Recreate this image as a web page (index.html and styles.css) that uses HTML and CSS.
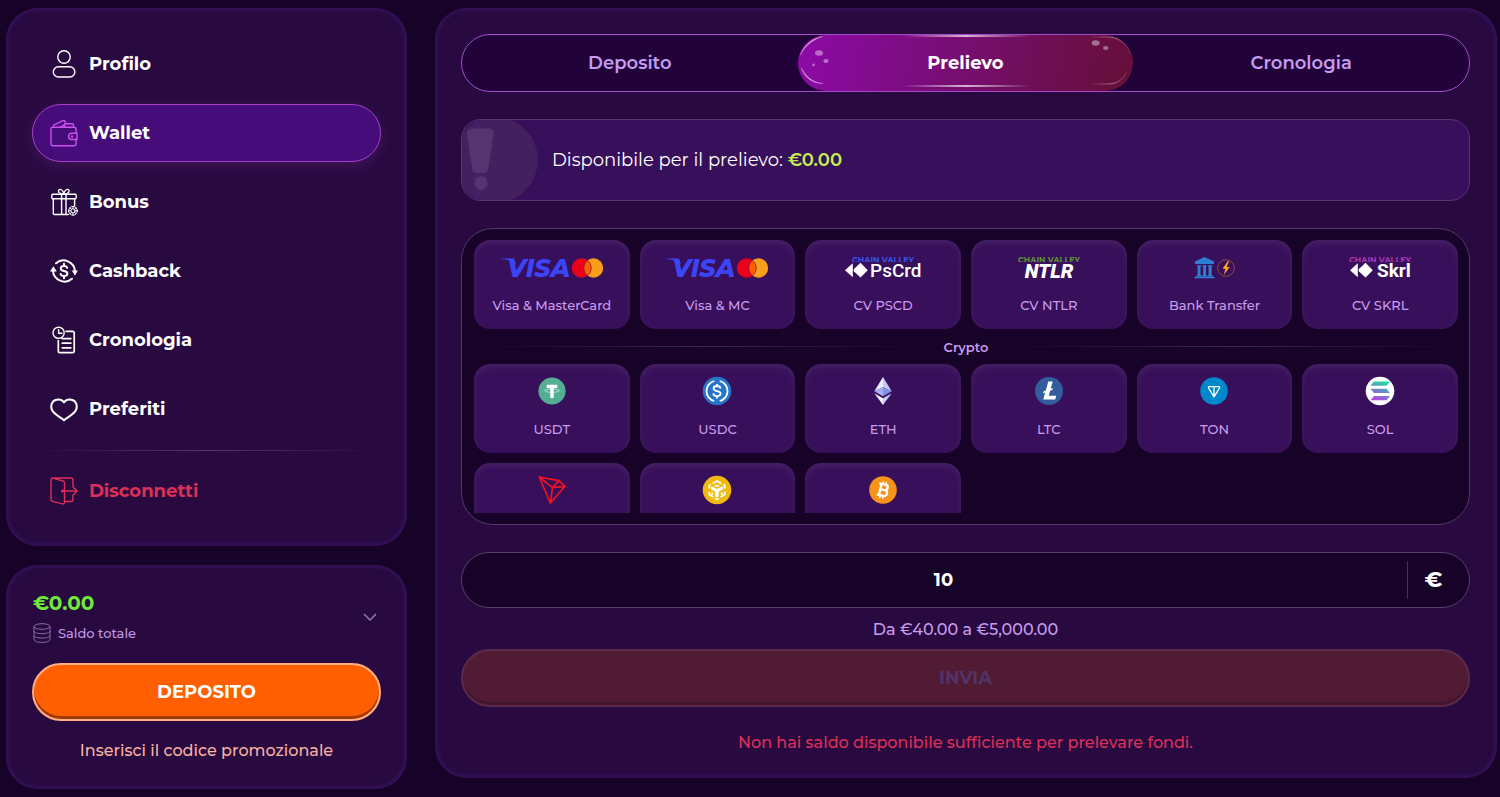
FILE: index.html
```html
<!DOCTYPE html>
<html lang="it">
<head>
<meta charset="utf-8">
<meta name="viewport" content="width=device-width, initial-scale=1">
<title>Wallet - Prelievo</title>
<link rel="stylesheet" href="styles.css">
</head>
<body>
<div class="layout">
  <aside class="sidebar">
    <nav class="panel menu" aria-label="Account">
      <a class="menu-item" href="#profilo">
        <svg class="menu-icon" viewBox="0 0 28 28"><circle cx="14" cy="7" r="6.2"/><rect x="3.3" y="16.8" width="21.6" height="10.2" rx="5.1"/></svg>
        Profilo
      </a>
      <a class="menu-item menu-item--active" href="#wallet" aria-current="page">
        <svg class="menu-icon" viewBox="0 0 28 28"><path d="M3 8.2h21a2 2 0 0 1 2 2v4.1M26 20.500v4.300a2 2 0 0 1-2 2H3.200a2.200 2.200 0 0 1-2.200-2.200V9.200q0-1 2-1M3.500 8V6.200l9.500-4.500q1.500-.6 2 1l.5 1.800M10.500 8l4.500-3M14.500 8V6.200q0-1.500 1.500-1.500h6q1.500 0 1.500 1.500V8"/><path d="M27 14.300h-5.300a3.100 3.100 0 0 0 0 6.200H27z"/><circle cx="22" cy="17.400" r=".5"/></svg>
        Wallet
      </a>
      <a class="menu-item" href="#bonus">
        <svg class="menu-icon" viewBox="0 0 28 28"><rect x="1.800" y="6.200" width="24.400" height="4.600" rx="1"/><path d="M3.300 10.800V25.500a1 1 0 0 0 1 1h14M24.600 10.800v7M11.600 6.500v20M16 6.500v20M13.800 6C10 6 8 4.500 8.600 2.600c1-2.600 4.800-.8 5.200 3.400.4-4.200 4.200-6 5.200-3.400C19.600 4.500 17.600 6 13.800 6z"/><g class="thin"><circle cx="23" cy="22.800" r="4.400"/><circle cx="23" cy="22.800" r="2.100"/><path d="M23 18.400v2.200M23 25v2.200M18.600 22.800h2.200M25.200 22.800h2.200M20 19.800l1.500 1.500M26 19.800l-1.500 1.500M20 25.800l1.500-1.500M26 25.800l-1.500-1.500"/></g></svg>
        Bonus
      </a>
      <a class="menu-item" href="#cashback">
        <svg class="menu-icon menu-icon--bold" viewBox="0 0 28 28"><path d="M6 6.300A11.500 11.500 0 0 1 25 14M22 21.700A11.500 11.500 0 0 1 3 14"/><path class="solid" d="M0 14.500L3.400 9.200l3.400 5.300zM21.800 13.500h6L25 18.800z"/><path d="M17.200 10.800c-.5-1.300-1.700-1.800-3.200-1.800-1.800 0-3.200.9-3.200 2.400 0 3.500 6.600 1.600 6.600 5.100 0 1.600-1.500 2.500-3.400 2.500-1.700 0-3-.7-3.400-2M14 6.800V9M14 19v2.200"/></svg>
        Cashback
      </a>
      <a class="menu-item" href="#cronologia">
        <svg class="menu-icon" viewBox="0 0 28 28"><circle cx="8.600" cy="6.800" r="5.600"/><path d="M8.600 3.600v3.600H12" /><path class="mid" d="M8.300 14.500v10.700a1.500 1.500 0 0 0 1.500 1.500h12.900a1.500 1.500 0 0 0 1.500-1.500V6.800a1.500 1.500 0 0 0-1.500-1.500H16M12.300 12.600h8.500M12.300 17.200h8.500M12.300 21.800h8.500"/></svg>
        Cronologia
      </a>
      <a class="menu-item" href="#preferiti">
        <svg class="menu-icon menu-icon--bold" viewBox="0 0 28 28"><path d="M14 25.200C12.500 23.900 7 20.800 3.600 17.200-.7 12.600 1 5 8 4.500c2.500-.1 4.600 1 6 2.800 1.400-1.800 3.500-2.900 6-2.800 7 .5 8.700 8.100 4.400 12.700C21 20.800 15.500 23.900 14 25.200z"/></svg>
        Preferiti
      </a>
      <hr class="menu-divider">
      <button class="menu-item menu-item--logout" type="button">
        <svg class="menu-icon" viewBox="0 0 28 28"><path d="M2.800 1h18.200a2 2 0 0 1 2 2v7M23 18v4.500a2 2 0 0 1-2 2h-6M2.800 1A2 2 0 0 0 1 3v19.500a2 2 0 0 0 1.500 1.900l10 2.500a1.500 1.500 0 0 0 2-1.500V6a2 2 0 0 0-1.500-2L2.800 1zM12 14h15M23.500 10.500L27.200 14l-3.700 3.600"/><circle cx="12.500" cy="14" r=".9"/></svg>
        Disconnetti
      </button>
    </nav>

    <section class="panel balance">
      <button class="balance-toggle" type="button" aria-expanded="false">
        <span class="balance-info">
          <span class="balance-amount">€0.00</span>
          <span class="balance-label">
            <svg class="coins-icon" viewBox="0 0 18 20"><ellipse cx="9" cy="3.500" rx="8" ry="2.800"/><path d="M1 3.500v4.300c0 1.800 3.500 2.900 8 2.900s8-1.100 8-2.900V3.500M1 8v4.200c0 1.800 3.500 2.900 8 2.900s8-1.100 8-2.900V8M1 12.500v4c0 1.800 3.500 2.900 8 2.900s8-1.100 8-2.900v-4"/></svg>
            Saldo totale
          </span>
        </span>
        <svg class="chevron-icon" viewBox="0 0 14 8"><path d="M1 1l6 6 6-6"/></svg>
      </button>
      <button class="cta" type="button">DEPOSITO</button>
      <button class="promo" type="button">Inserisci il codice promozionale</button>
    </section>
  </aside>

  <main class="panel content">
    <div class="tabs" role="tablist">
      <button class="tab" type="button" role="tab" aria-selected="false">Deposito</button>
      <button class="tab tab--active" type="button" role="tab" aria-selected="true">
        <svg class="tab-shine" viewBox="0 0 336 56" aria-hidden="true">
          <defs>
            <linearGradient id="line"><stop offset="0" stop-color="#fff" stop-opacity="0"/><stop offset=".5" stop-color="#fff" stop-opacity=".7"/><stop offset="1" stop-color="#fff" stop-opacity="0"/></linearGradient>
            <linearGradient id="edge"><stop offset="0" stop-color="#fff" stop-opacity="0"/><stop offset=".6" stop-color="#fff" stop-opacity=".4"/><stop offset="1" stop-color="#fff" stop-opacity=".1"/></linearGradient>
          </defs>
          <rect x="103" y="0" width="130" height="2" fill="url(#line)"/>
          <rect x="103" y="50" width="130" height="2" fill="url(#line)"/>
          <g class="shine-dots"><ellipse cx="21" cy="18" rx="4" ry="2.700"/><ellipse cx="28" cy="26" rx="2.600" ry="2.100"/><circle cx="15.500" cy="30" r="1.400"/><ellipse cx="298" cy="8" rx="4" ry="2.700"/><ellipse cx="308" cy="13" rx="2.700" ry="2"/></g>
          <path class="shine-arcs" d="M2.500 20C6 10 14 3 25 1.500c-9 2.500-18 9-22.500 18.500zM3.500 33C8 42 15 47.500 25 48.500 14 48.500 6.500 42.500 3.500 33z"/>
          <path class="shine-edge" d="M290 2h20c10 0 19 6 22.500 16.500M290 49h20c9 0 16-4.500 19-12"/>
        </svg>
        <span class="tab-text">Prelievo</span>
      </button>
      <button class="tab" type="button" role="tab" aria-selected="false">Cronologia</button>
    </div>

    <div class="notice">
      <svg class="notice-icon" viewBox="0 0 76 80" aria-hidden="true"><circle class="notice-disc" cx="33" cy="40" r="43"/><path class="notice-mark" d="M5 14c-.4-3.500 2-5.500 6-5.500h15c4 0 6 2 5.500 5.500l-5 34c-.5 3.500-2.500 5-6 5h-4.500c-3.500 0-5.500-1.500-6-5z"/><circle class="notice-mark" cx="19" cy="63" r="6.700"/></svg>
      <p class="notice-text">Disponibile per il prelievo: <strong class="notice-sum">€0.00</strong></p>
    </div>

    <div class="methods">
      <div class="methods-scroll">
        <div class="grid">
          <button class="method" type="button">
            <svg class="logo" viewBox="0 0 104 28"><path fill="#3b45f5" d="M1 5.500h13l2 6C12 8 7 6.300 1 6z"/><text class="visa-text" x="7" y="24">VISA</text><circle cx="81.500" cy="15" r="9.700" fill="#eb001b"/><circle cx="93.500" cy="15" r="9.700" fill="#f79e1b"/><path d="M87.500 7.400a9.700 9.700 0 0 1 0 15.200 9.700 9.700 0 0 1 0-15.200z" fill="#ff5f00" stroke="#7a1735" stroke-width=".8"/></svg>
            <span>Visa &amp; MasterCard</span>
          </button>
          <button class="method" type="button">
            <svg class="logo" viewBox="0 0 104 28"><path fill="#3b45f5" d="M1 5.500h13l2 6C12 8 7 6.300 1 6z"/><text class="visa-text" x="7" y="24">VISA</text><circle cx="81.500" cy="15" r="9.700" fill="#eb001b"/><circle cx="93.500" cy="15" r="9.700" fill="#f79e1b"/><path d="M87.500 7.400a9.700 9.700 0 0 1 0 15.200 9.700 9.700 0 0 1 0-15.200z" fill="#ff5f00" stroke="#7a1735" stroke-width=".8"/></svg>
            <span>Visa &amp; MC</span>
          </button>
          <button class="method" type="button">
            <svg class="logo" viewBox="0 0 104 28">
              <svg x="0" y="0" width="104" height="9"><text class="chain-text chain-text--blue" x="52" y="10">CHAIN VALLEY</text></svg>
              <path fill="#fff" d="M14 17.300l7.800-7v14zM22.700 16.300l6.800-6.500 7.300 7.500-7.300 7.300-6.800-6.300z"/>
              <text class="brand-text" x="39" y="24">PsCrd</text>
            </svg>
            <span>CV PSCD</span>
          </button>
          <button class="method" type="button">
            <svg class="logo" viewBox="0 0 104 28">
              <svg x="0" y="0" width="104" height="9"><text class="chain-text chain-text--green" x="52" y="10">CHAIN VALLEY</text></svg>
              <text class="ntlr-text" x="52" y="25">NTLR</text>
            </svg>
            <span>CV NTLR</span>
          </button>
          <button class="method" type="button">
            <svg class="logo" viewBox="0 0 104 28"><path fill="#2d7fd3" d="M42.500 4L52 8.500V11H33V8.500zM35 12.300h4.200v1.200h-.7v8.300h.7V23H35v-1.200h.6v-8.300H35zM40.500 12.300h4.200v1.200H44v8.300h.7V23h-4.200v-1.200h.7v-8.300h-.7zM46 12.300h4.200v1.200h-.6v8.300h.6V23H46v-1.200h.6v-8.300H46zM33.300 23.300h18.400L53 25.300H32z"/><circle cx="64" cy="15" r="8.300" fill="none" stroke="#8c4a4a" stroke-width="1"/><path fill="#ffa51f" d="M65.800 8.300l-5.300 7.500h3L61.700 22l6-8h-3.200l2.700-5.700z"/></svg>
            <span>Bank Transfer</span>
          </button>
          <button class="method" type="button">
            <svg class="logo" viewBox="0 0 104 28">
              <svg x="0" y="0" width="104" height="9"><text class="chain-text chain-text--pink" x="52" y="10">CHAIN VALLEY</text></svg>
              <path fill="#fff" d="M22 17.300l7.800-7v14zM30.700 16.300l6.800-6.500 7.300 7.500-7.300 7.300-6.800-6.300z"/>
              <text class="brand-text brand-text--bold" x="49" y="24">Skrl</text>
            </svg>
            <span>CV SKRL</span>
          </button>
        </div>

        <h2 class="group-title">Crypto</h2>

        <div class="grid">
          <button class="method" type="button">
            <svg class="coin" viewBox="0 0 28 28"><circle cx="14" cy="14" r="13.600" fill="#53ae94"/><path fill="#fff" d="M8.700 7.800h10.600v3.300h-3.600v10h-3.400v-10H8.700z"/><ellipse cx="14" cy="13.700" rx="7.200" ry="1.700" fill="none" stroke="#fff" stroke-opacity=".8" stroke-width=".7"/></svg>
            <span>USDT</span>
          </button>
          <button class="method" type="button">
            <svg class="coin" viewBox="0 0 28 28"><circle cx="14" cy="14" r="14.300" fill="#2775ca"/><g fill="none" stroke="#fff" stroke-width="1.800"><path d="M11.300 4A10.300 10.300 0 0 0 11.300 24M16.700 4a10.300 10.300 0 0 1 0 20"/><path d="M17.500 11.500c-.2-1.600-1.600-2.500-3.500-2.500s-3.400.9-3.400 2.500c0 3.600 7 1.500 7 5.100 0 1.500-1.500 2.500-3.600 2.500s-3.600-1-3.700-2.700M14 7v2.200M14 19v2.500"/></g></svg>
            <span>USDC</span>
          </button>
          <button class="method" type="button">
            <svg class="coin" viewBox="0 0 28 28"><path fill="#e9eafd" d="M14 0v10.300L5.300 14.200z"/><path fill="#c3c9fa" d="M14 0v10.300l8.700 3.900z"/><path fill="#a3aef5" d="M14 10.300v9L5.300 14.200z"/><path fill="#8290ea" d="M14 10.300v9l8.700-5.100z"/><path fill="#f1f1fd" d="M5.300 16.200L14 21.300V28z"/><path fill="#c3c9fa" d="M22.700 16.200L14 21.300V28z"/></svg>
            <span>ETH</span>
          </button>
          <button class="method" type="button">
            <svg class="coin" viewBox="0 0 28 28"><circle cx="14" cy="14" r="14" fill="#345d9d"/><path fill="#fff" d="M13.300 4.500h4.400l-2 7.300 2.200-.8-.6 2-2.200.8-1.300 4.900h7.400l-1 3.800H8.300l1.900-6.900-2.100.8.600-2.100 2.100-.8z"/></svg>
            <span>LTC</span>
          </button>
          <button class="method" type="button">
            <svg class="coin" viewBox="0 0 28 28"><circle cx="14" cy="14" r="13.800" fill="#0088cc"/><path fill="none" stroke="#fff" stroke-width="1.300" stroke-linejoin="round" d="M9.300 9.700h9.400c.8 0 1.100.7.700 1.400L14 19.800l-5.400-8.700c-.4-.7-.1-1.400.7-1.400zM14 9.700v9.600"/></svg>
            <span>TON</span>
          </button>
          <button class="method" type="button">
            <svg class="coin" viewBox="0 0 28 28"><defs><linearGradient id="sol" gradientUnits="userSpaceOnUse" x1="10" y1="24" x2="18" y2="4"><stop offset="0" stop-color="#b845e8"/><stop offset=".5" stop-color="#6c86c9"/><stop offset="1" stop-color="#19e2a0"/></linearGradient></defs><circle cx="14" cy="14" r="14.300" fill="#fff"/><path fill="url(#sol)" d="M8 4.500h16l-3.500 4.300H4.500zM4.500 11.800h16L24 16H8zM8 19h16l-3.500 4.300H4.500z"/></svg>
            <span>SOL</span>
          </button>
          <button class="method" type="button">
            <svg class="coin" viewBox="0 0 28 28"><path fill="none" stroke="#ee1322" stroke-width="1.700" stroke-linejoin="round" d="M1.200 1L21 4.700l6 5.600L12.400 27zM1.200 1l13.300 10.600L12.400 27M14.500 11.600L27 10.300M14.500 11.600L21 4.700"/></svg>
            <span>TRX</span>
          </button>
          <button class="method" type="button">
            <svg class="coin" viewBox="0 0 28 28"><circle cx="14" cy="14" r="14.300" fill="#f0b90b"/><path fill="#fff" d="M9 10.300l5 2.700 5-2.700 1.300.8v2l-4.600 2.700v4.700L14 21.500l-1.700-1v-4.700L7.700 13.100v-2z"/><path fill="none" stroke="#fff" stroke-width="1.600" d="M9.700 7.500L14 5l4.300 2.500M6.200 15.500v3L10.500 21M21.800 15.500v3L17.500 21M6.200 12.500V9.300l1.600-.9M21.800 12.500V9.300l-1.600-.9M11.800 9.200l2.200 1.200 2.200-1.200M9 16.300v1.200l1.300.8M19 16.300v1.200l-1.300.8M12 22.400l2 1.200 2-1.200"/></svg>
            <span>BNB</span>
          </button>
          <button class="method" type="button">
            <svg class="coin" viewBox="0 0 28 28"><circle cx="14" cy="14" r="13.800" fill="#f7931a"/><g fill="none" stroke="#fff" stroke-width="2.300" transform="rotate(13 14 14)"><path d="M9 8.300h6.300a2.700 2.700 0 0 1 0 5.400H11M11.200 8.300v11.400M9 19.700h6.800a3 3 0 0 0 0-6H12"/><path stroke-width="1.600" d="M12.500 5.500v3M15.500 5.500v3M12.500 19.500v3M15.500 19.500v3"/></g></svg>
            <span>BTC</span>
          </button>
        </div>
      </div>
    </div>

    <form class="withdraw">
      <div class="amount">
        <input class="amount-input" id="amount" type="text" inputmode="decimal" value="10" aria-describedby="limits" aria-label="Importo">
        <label class="amount-currency" for="amount">€</label>
      </div>
      <p class="limits" id="limits">Da €40.00 a €5,000.00</p>
      <button class="submit" type="submit" disabled>INVIA</button>
      <p class="error">Non hai saldo disponibile sufficiente per prelevare fondi.</p>
    </form>
  </main>
</div>
</body>
</html>
```

FILE: styles.css
```css
* {
  box-sizing: border-box;
}

body {
  margin: 0;
  min-height: 100vh;
  background: #170327;
  color: #fff;
  font-family: Montserrat, Inter, "Open Sans", sans-serif;
  font-size: 18px;
  line-height: 24px;
}

button,
input {
  font: inherit;
  color: inherit;
  border: 0;
  background: none;
  padding: 0;
}

button {
  cursor: pointer;
}

p,
h2 {
  margin: 0;
}

.layout {
  display: grid;
  grid-template-columns: 401px minmax(0, 1fr);
  align-items: start;
  gap: 28px;
  padding: 8px 3px 8px 6px;
}

.sidebar {
  display: flex;
  flex-direction: column;
  gap: 19px;
}

.panel {
  padding: 26px;
  border-radius: 32px;
  background: #280a40;
  box-shadow: inset 0 0 5px 1px #3d176a;
}

/* Account menu */

.menu {
  display: flex;
  flex-direction: column;
  gap: 11px;
  padding-top: 27px;
}

.menu-item {
  display: flex;
  align-items: center;
  gap: 11px;
  height: 58px;
  padding: 0 17px;
  border: 1px solid transparent;
  border-radius: 29px;
  color: #fff;
  font-weight: 700;
  text-decoration: none;
}

.menu-item--active {
  border-color: #a640c8;
  background: #460c7a;
  box-shadow: 0 4px 14px rgba(166, 64, 200, 0.2);
}

.menu-item--active .menu-icon {
  stroke: #cf4ff0;
}

.menu-item--logout {
  color: #dc2f57;
}

.menu-icon {
  flex: none;
  width: 28px;
  height: 28px;
  fill: none;
  stroke: currentColor;
  stroke-width: 1.4;
  stroke-linejoin: round;
  stroke-linecap: round;
  overflow: visible;
}

.menu-icon--bold {
  stroke-width: 2;
}

.menu-icon .thin {
  stroke-width: 1;
}

.menu-icon .mid {
  stroke-width: 1.7;
}

.menu-icon .solid {
  fill: currentColor;
  stroke: none;
}

.menu-divider {
  width: 100%;
  height: 1px;
  margin: 1px 0 0;
  border: 0;
  background: linear-gradient(90deg, transparent, #54366a, transparent);
}

/* Balance */

.balance {
  display: flex;
  flex-direction: column;
}

.balance-toggle {
  display: flex;
  align-items: center;
  justify-content: space-between;
  padding: 0 4px 0 1px;
  text-align: left;
}

.balance-info {
  display: flex;
  flex-direction: column;
  gap: 8px;
}

.balance-amount {
  color: #6ee83a;
  font-size: 20px;
  font-weight: 700;
}

.balance-label {
  display: flex;
  align-items: center;
  gap: 7px;
  color: #c39ae6;
  font-size: 13px;
  font-weight: 500;
  line-height: 20px;
}

.coins-icon {
  width: 18px;
  height: 20px;
  fill: none;
  stroke: #8d6fa8;
}

.chevron-icon {
  width: 14px;
  height: 8px;
  fill: none;
  stroke: #9577b0;
  stroke-width: 1.5;
}

.cta {
  height: 58px;
  margin-top: 20px;
  border: 2px solid #ffae85;
  border-radius: 29px;
  background: #ff5f00;
  box-shadow: inset 0 -3px 0 #a03a00;
  font-weight: 700;
}

.promo {
  margin-top: 18px;
  color: #f9b0a0;
  font-size: 16px;
  font-weight: 500;
}

/* Tabs */

.content {
  display: flex;
  flex-direction: column;
  gap: 27px;
  padding: 26px 27px 23px 26px;
}

.tabs {
  display: grid;
  grid-template-columns: repeat(3, 1fr);
  height: 58px;
  border: 1px solid #a54bca;
  border-radius: 29px;
  background: #21033a;
}

.tab {
  color: #c69cf0;
  font-weight: 600;
}

.tab--active {
  position: relative;
  border-radius: 28px;
  background: linear-gradient(100deg, #8e0aa8, #7c0d80 35%, #6d0f52 75%, #660f38);
  color: #fff;
  font-weight: 700;
}

.tab-shine {
  position: absolute;
  inset: 0;
  width: 100%;
  height: 100%;
}

.shine-dots {
  fill: #fff;
  opacity: 0.4;
}

.shine-arcs {
  fill: #fff;
  stroke: #fff;
  stroke-width: 0.4;
  opacity: 0.6;
}

.shine-edge {
  fill: none;
  stroke: url(#edge);
}

.tab-text {
  position: relative;
}

/* Notice */

.notice {
  position: relative;
  display: flex;
  align-items: center;
  min-height: 82px;
  padding: 16px 24px 16px 90px;
  overflow: hidden;
  border: 1px solid #593378;
  border-radius: 20px;
  background: #380f5a;
}

.notice-icon {
  position: absolute;
  top: 0;
  left: 0;
  width: 76px;
  height: 80px;
}

.notice-disc {
  fill: #43205f;
}

.notice-mark {
  fill: #55346f;
}

.notice-sum {
  color: #c5ee50;
  font-weight: 600;
}

/* Payment methods */

.methods {
  padding: 11px 11px 11px 12px;
  border: 1px solid #55346e;
  border-radius: 32px;
  background: #170327;
}

.methods-scroll {
  max-height: 273px;
  overflow-y: auto;
  scrollbar-width: none;
}

.grid {
  display: grid;
  grid-template-columns: repeat(6, 1fr);
  gap: 10px;
}

.method {
  display: flex;
  flex-direction: column;
  align-items: center;
  gap: 14px;
  height: 89px;
  padding: 13px 4px;
  border-radius: 16px;
  background: #380f5a;
  box-shadow: inset 0 3px 6px rgba(255, 255, 255, 0.08);
  color: #c99bef;
  font-size: 13px;
  font-weight: 500;
  line-height: 20px;
  white-space: nowrap;
}

.logo {
  width: 104px;
  height: 28px;
}

.coin {
  width: 28px;
  height: 28px;
  overflow: visible;
}

.visa-text {
  fill: #3b45f5;
  font: italic 800 25px Montserrat, "Open Sans", sans-serif;
}

.brand-text {
  fill: #fff;
  font: 500 19px Roboto, sans-serif;
}

.brand-text--bold {
  font-weight: 700;
}

.ntlr-text {
  fill: #fff;
  font: italic 900 20px Roboto, sans-serif;
  text-anchor: middle;
}

.chain-text {
  font: 700 8px Montserrat, Inter, sans-serif;
  text-anchor: middle;
}

.chain-text--blue {
  fill: #3554e8;
}

.chain-text--green {
  fill: #5c9434;
}

.chain-text--pink {
  fill: #a636b4;
}

.group-title {
  display: flex;
  align-items: center;
  gap: 16px;
  height: 35px;
  color: #c99bef;
  font-size: 13px;
  font-weight: 600;
  line-height: 20px;
}

.group-title::before,
.group-title::after {
  content: "";
  flex: 1;
  height: 1px;
  background: linear-gradient(90deg, transparent, #402454, transparent);
}

/* Withdrawal form */

.withdraw {
  display: flex;
  flex-direction: column;
}

.amount {
  display: flex;
  align-items: center;
  height: 56px;
  border: 1px solid #594069;
  border-radius: 28px;
  background: #170327;
}

.amount-input {
  flex: 1;
  min-width: 0;
  height: 100%;
  padding-left: 18px;
  border-radius: 28px;
  outline: 0;
  font-weight: 700;
  text-align: center;
}

.amount-currency {
  width: 62px;
  padding: 7px 10px 7px 0;
  border-left: 1px solid #45305a;
  font-size: 22px;
  font-weight: 700;
  text-align: center;
}

.limits {
  margin-top: 10px;
  color: #c99bef;
  font-size: 16px;
  font-weight: 500;
  text-align: center;
}

.submit {
  height: 58px;
  margin-top: 7px;
  border: 2px solid #5b2a4a;
  border-radius: 29px;
  background: #521b34;
  box-shadow: inset 0 -3px 0 #42142e;
  color: #503468;
  font-weight: 700;
  cursor: default;
}

.error {
  margin-top: 24px;
  color: #dc2f57;
  font-size: 16px;
  font-weight: 500;
  text-align: center;
}
```
